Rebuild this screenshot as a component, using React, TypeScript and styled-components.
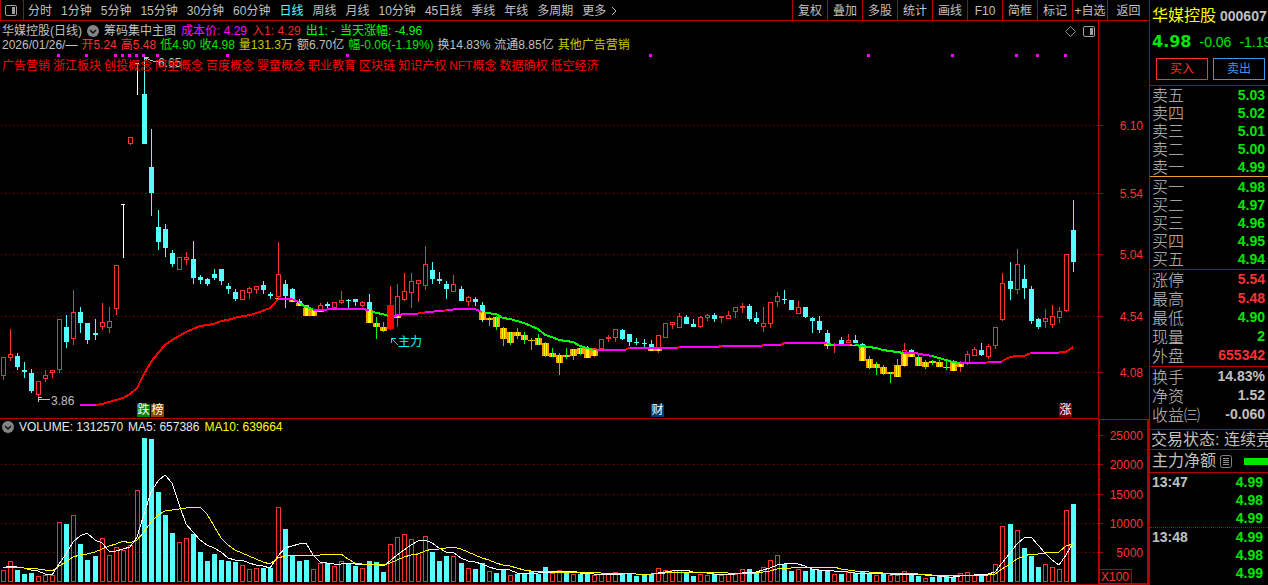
import React from "react";
import styled, { createGlobalStyle } from "styled-components";

const color = {
  line: "#b40000",
  dot: "#b00000",
  up: "#ff3232",
  down: "#54ffff",
  green: "#00e600",
  lime: "#00ff00",
  gray: "#c0c0c0",
  magenta: "#ff00ff",
};

const Global = createGlobalStyle`
  * { box-sizing: border-box; }
  body { margin: 0; background: #000; }
  #root { min-height: 100vh; }
  body, button {
    font-family: "Liberation Sans", "Noto Sans CJK SC", sans-serif;
    font-size: 12px;
    line-height: 14px;
    color: ${color.gray};
  }
  svg { display: block; }
`;

const Page = styled.div`
  display: grid;
  grid-template-columns: minmax(0, 1fr) 119px;
  min-height: 100vh;
  overflow: hidden;
  background: #000;
`;

const Main = styled.main`
  min-width: 0;
  display: flex;
  flex-direction: column;
`;

const Toolbar = styled.nav`
  display: flex;
  height: 21px;
  border-left: 1px solid ${color.line};
  border-bottom: 1px solid ${color.line};
  white-space: nowrap;
`;

const ToolIcon = styled.button`
  width: 23px;
  padding: 0 0 0 4px;
  border: 0;
  border-right: 1px solid ${color.line};
  background: none;
`;

const Periods = styled.div`
  display: flex;
  flex: 1;
  gap: 9px;
  padding-left: 4px;
  overflow: hidden;
`;

const Period = styled.button<{ $active?: boolean }>`
  display: flex;
  align-items: center;
  gap: 4px;
  padding: 2px 0 0;
  border: 0;
  background: none;
  color: ${(p) => (p.$active ? color.down : color.gray)};
`;

const Tools = styled.div`
  display: flex;
`;

const Tool = styled.button<{ $wide?: boolean }>`
  width: ${(p) => (p.$wide ? 42 : 35)}px;
  padding: 2px 0 0;
  border: 0;
  border-left: 1px solid ${color.line};
  background: none;
`;

const ChartRow = styled.section`
  display: flex;
  position: relative;
`;

const Plot = styled.div`
  position: relative;
  flex: 1;
  min-width: 0;
  overflow: hidden;
  border-bottom: 1px solid ${color.line};
`;

const Overlay = styled.header`
  position: absolute;
  inset: 3px 3px auto 2px;
  display: flex;
  justify-content: space-between;
  align-items: flex-start;
  white-space: nowrap;
`;

const Legend = styled.div`
  display: flex;
  flex-direction: column;
`;

const LegendRow = styled.div<{ $gap?: number; $tags?: boolean }>`
  display: flex;
  align-items: center;
  gap: ${(p) => p.$gap ?? 4}px;
  height: 14px;
  margin-top: ${(p) => (p.$tags ? 7 : 0)}px;
`;

const VolumeLegend = styled(LegendRow)`
  position: absolute;
  top: 1px;
  left: 2px;
`;

const Tint = styled.span<{ $c?: string }>`
  color: ${(p) => p.$c ?? color.gray};
`;

const Corner = styled.div`
  display: flex;
  align-items: center;
  gap: 7px;
  height: 14px;
`;

const Badge = styled.button<{ $x: number; $bg: string }>`
  position: absolute;
  left: ${(p) => p.$x}px;
  bottom: 1px;
  width: 13px;
  height: 13px;
  padding: 0;
  border: 0;
  line-height: 13px;
  text-align: center;
  color: #fff;
  background: ${(p) => p.$bg};
`;

const Side = styled.aside`
  min-width: 0;
  overflow: hidden;
  border-left: 1px solid ${color.line};
  white-space: nowrap;
`;

const Head = styled.header`
  border-bottom: 1px solid ${color.line};
  padding-bottom: 5px;
`;

const Title = styled.div`
  display: flex;
  align-items: center;
  gap: 4px;
  height: 30px;
  padding: 2px 0 0 2px;
  font-size: 16px;
  color: #ffff00;
`;

const Code = styled.b`
  font-size: 14px;
  color: ${color.gray};
`;

const Price = styled.div`
  display: flex;
  align-items: center;
  gap: 8px;
  height: 24px;
  padding-left: 2px;
  font-size: 14px;
  color: ${color.green};
`;

const Last = styled.b`
  font-family: "DejaVu Sans", sans-serif;
  font-size: 16px;
`;

const Trade = styled.div`
  display: flex;
  gap: 5px;
  padding: 4px 3px 0 6px;
`;

const TradeButton = styled.button<{ $c: string }>`
  flex: 1;
  height: 22px;
  padding: 0;
  border: 1px solid ${(p) => p.$c};
  background: none;
  color: ${(p) => p.$c};
`;

const Block = styled.div<{ $edge?: string; $pad?: string; $dotted?: boolean }>`
  padding: ${(p) => p.$pad ?? "0"};
  border-bottom: 1px ${(p) => (p.$dotted ? "dotted" : "solid")} ${(p) => p.$edge ?? color.line};
`;

const Quotes = styled.table<{ $row: number; $inset?: number }>`
  width: 100%;
  border-collapse: collapse;
  th, td {
    height: ${(p) => p.$row}px;
    padding: 0;
    line-height: ${(p) => p.$row}px;
  }
  th {
    padding: 2px 0 0 2px;
    line-height: ${(p) => p.$row - 2}px;
    text-align: left;
    font-size: 16px;
    font-weight: 300;
  }
  td {
    padding-right: ${(p) => p.$inset ?? 3}px;
    text-align: right;
    font-size: 14px;
    font-weight: 700;
  }
`;

const Ticks = styled(Quotes)`
  th {
    padding-top: 0;
    line-height: 18px;
    font-size: 14px;
    font-weight: 700;
  }
`;

const Status = styled.div`
  height: 19px;
  padding-left: 1px;
  font-size: 16px;
  line-height: 20px;
`;

const NetFlow = styled.div`
  display: flex;
  align-items: center;
  gap: 4px;
  height: 22px;
  padding-left: 2px;
  font-size: 16px;
  line-height: 20px;
`;

const FlowBar = styled.span`
  flex: 1;
  height: 7px;
  margin-left: 8px;
  background: ${color.green};
`;

/* kind, high, body top, body bottom, low [, gold top, gold bottom] */
const candleData = `
R,357,357,376,380;R,329,354,358,361;C,353,356,367,370;C,362,370,372,378;C,369,373,391,393;R,381,381,395,398;
R,370,375,379,382;R,370,370,373,378;R,319,319,370,373;C,315,327,342,348;R,290,312,339,345;C,307,312,323,333;
C,323,323,340,344;C,319,333,335,340;R,303,322,327,330;R,307,321,328,333;R,265,265,309,315;W,204,0,0,258;
R,137,137,144,145;W,63,0,0,95;C,57,94,144,144;C,129,167,193,216;C,210,227,242,250;C,224,229,248,257;
C,250,253,264,267;R,257,257,270,270;R,252,257,260,265;C,241,259,278,284;C,275,277,280,284;C,278,279,284,286;
C,269,274,278,280;C,269,269,281,285;C,283,286,289,294;C,289,292,299,301;R,290,290,300,300;R,287,288,293,299;
R,286,286,290,294;C,281,285,290,294;C,292,294,296,299;R,242,274,297,298,298,299;C,280,284,296,308,298,299;C,288,289,299,299,299,302;
C,299,301,303,303,303,306;C,305,305,308,308,308,316;G,309,0,0,309,309,316;R,303,305,310,310,310,312;C,302,304,306,308;R,302,302,308,309;
R,291,300,303,304;C,299,300,301,308;C,299,299,302,306;R,301,302,306,307;C,294,302,310,310,310,323;G,317,0,0,339,323,327;
G,322,0,0,332,327,331;B,286,305,329,330;R,284,296,316,327,316,318;R,273,291,300,301;R,273,281,293,308;R,280,280,284,302;
R,246,264,286,290;C,262,270,279,284;C,272,279,281,284;C,281,284,289,299;R,275,284,292,292;C,286,289,301,301;
R,296,297,302,306;C,297,299,302,306;C,302,305,312,322,312,320;G,317,0,0,326,318,320;G,316,0,0,330,317,327;G,327,0,0,346,328,339;
G,332,0,0,345,332,343;G,328,0,0,339,332,336;G,332,0,0,344,335,340;G,338,0,0,350,340,341;G,334,0,0,345,338,345;G,342,0,0,357,343,356;
G,348,0,0,357,353,357;G,353,0,0,375,355,363;G,348,0,0,359,355,357;G,349,0,0,360,349,356;G,345,0,0,355,348,354;C,346,0,0,348,348,358;
R,348,348,350,357,350,356;R,339,339,349,349;R,335,337,339,342;R,329,329,338,342;C,329,330,339,340;C,334,334,342,346;
C,338,342,343,345;C,339,343,344,347,348,349;C,340,344,347,347,348,351;R,335,335,348,353,348,351;R,323,323,338,338;R,322,322,325,329;
R,313,316,328,328;C,315,317,324,324;C,319,324,327,327;R,316,317,327,328;R,314,315,318,321;C,313,315,319,322;
R,316,316,318,323;R,311,315,319,319;R,307,307,312,318;R,303,306,308,313;C,304,306,319,321;C,312,318,322,324;
R,307,323,327,332;R,302,302,324,328;R,292,296,302,307;C,290,299,300,304;C,300,300,310,310;R,301,307,314,314;
C,307,307,317,318;C,317,318,321,333;C,316,321,330,333;C,330,333,343,349,343,346;R,343,0,0,353,345,346;C,337,340,344,344,345,346;
R,334,340,343,343,344,346;C,335,340,343,343,345,346;C,343,344,346,346,346,361;G,356,0,0,369,359,368;G,362,0,0,375,364,368;G,365,0,0,375,367,374;
G,372,0,0,383,372,374;G,359,0,0,376,365,377;R,343,350,353,367,353,366;C,349,350,353,353,353,357;G,354,0,0,366,357,366;G,360,0,0,369,362,367;
G,360,0,0,365,361,363;G,360,0,0,367,362,367;G,360,0,0,370,367,368;C,360,0,0,362,362,371;R,361,0,0,372,363,367;R,351,354,363,365,363,364;
R,347,349,356,356;C,343,350,355,356;R,344,346,357,359;R,327,327,346,349;R,273,283,320,321;C,262,281,289,300;
R,249,264,290,294;C,265,279,288,299;C,286,289,321,324;C,318,319,327,329;R,309,318,322,328;R,305,316,325,328;
R,307,311,318,323;R,254,254,311,312;C,200,230,262,272`;

const candles = candleData
  .replace(/\s/g, "")
  .split(";")
  .map((row) => {
    const [kind, ...n] = row.split(",");
    return { kind, n: n.map(Number) };
  });

/* bar heights; a leading minus marks a falling day */
const volumes = [
  12, 21, -12, -8, -9, 6, 7, 7, 60, -58, 67, -38, -22, -26, 44, 27, 35, 32, 37, 92, -144, -143, -90, -67, -49, 40, 44,
  -48, -30, -21, -28, -22, -21, -20, 17, 13, 14, -14, -14, 75, -53, -26, -21, -22, 13, 19, -19, 16, 21, -18, -16, 14,
  -21, -20, -10, 38, 45, 48, 43, 29, 46, -30, -21, -26, 26, -19, 14, -13, -19, 11, -9, -12, 7, -8, -9, -11, -8, -15, 9,
  12, -10, 8, -8, -9, 7, 8, 8, 10, -9, -9, -6, -8, -8, 14, 12, 12, 12, -10, -6, 8, 7, -8, 7, 8, 8, 13, -13, -9, 15, 22,
  27, -18, -11, 13, -11, -13, -12, -12, 8, -8, 10, -9, -11, -9, 7, -8, 7, 7, 11, -8, -6, 4, -5, -6, -6, -5, 9, 10, 7,
  -7, 8, 18, 56, -58, 52, -34, -26, -15, 18, 15, 13, 72, -78,
];

const candleX = (i: number) => 3 + 7 * i + Math.floor((i + 13) / 26);

const costLine: [string, string][] = [
  [color.magenta, "80,405 96,405"],
  [
    "#ff0000",
    "96,405 102,404 109,402 116,400 123,398 130,394 137,388 144,374 151,362 158,353 165,345 172,340 179,336 186,332 193,329 200,326 207,325 214,324 221,321 228,320 238,317 250,315 257,313 270,308 274,304 278,299",
  ],
  [color.magenta, "278,299 292,299 299,302"],
  [color.lime, "299,303 306,307 313,309"],
  [color.magenta, "313,310 341,309 362,309 369,310"],
  [color.lime, "371,311 376,313 383,314 388,316"],
  [color.magenta, "394,316 404,314 418,314"],
  ["#ff0000", "418,313 425,313"],
  [color.magenta, "425,312 443,311"],
  ["#ff0000", "443,311 447,310"],
  [color.magenta, "447,310 460,309 475,309 482,312"],
  [
    color.lime,
    "485,313 496,314 503,318 510,319 517,321 524,323 531,326 538,329 545,335 552,337 559,340 566,341 573,342 580,346 587,348 594,350",
  ],
  [color.magenta, "597,350 625,350 629,348 676,348 680,347 717,347 722,346 760,346 764,345 781,345 785,343 815,343 827,343"],
  ["#ff0000", "626,349 630,348"],
  ["#ff0000", "677,348 680,347"],
  ["#ff0000", "719,347 722,346"],
  ["#ff0000", "761,346 764,345"],
  ["#ff0000", "781,344 785,343"],
  [color.lime, "827,344 834,345"],
  [color.magenta, "834,345 850,345"],
  [color.lime, "855,345 862,346 869,347 876,348 883,350 890,351 897,352 904,353"],
  [color.magenta, "904,353 915,353 920,354 932,356"],
  [color.lime, "932,356 939,358 946,360 953,362 960,363"],
  [color.magenta, "960,363 985,363"],
  ["#ff0000", "985,363 989,362"],
  [color.magenta, "989,362 1002,362"],
  ["#ff0000", "1002,361 1010,357 1017,356 1024,356 1031,353"],
  [color.magenta, "1031,353 1059,353"],
  ["#ff0000", "1059,352 1066,352 1073,347"],
];

const signalDots = [58, 86, 115, 122, 129, 136, 143, 157, 227, 347, 650, 868, 952, 1016, 1037, 1065];

function Candle({ kind, n, x }: { kind: string; n: number[]; x: number }) {
  const [high, top, bottom, low, goldTop, goldBottom] = n;
  const c = kind === "G" ? color.lime : kind === "C" ? color.down : kind === "W" ? "#fff" : color.up;
  const gold = goldTop !== undefined && (
    <rect x={x - 3} y={goldTop} width={7} height={goldBottom - goldTop} fill="url(#gold)" />
  );
  if (kind === "W") {
    return (
      <g fill={c}>
        <rect x={x - 2} y={high} width={4} height={1} />
        <rect x={x} y={high} width={1} height={low - high} />
      </g>
    );
  }
  if (!top) {
    return (
      <g>
        {kind === "G" && gold}
        <rect x={x} y={high} width={1} height={low - high} fill={c} />
        {kind !== "G" && gold}
      </g>
    );
  }
  const hollow = kind === "R" && bottom - top > 2;
  return (
    <g>
      <rect x={x} y={high} width={1} height={Math.max(0, top - high)} fill={c} />
      <rect x={x} y={bottom} width={1} height={Math.max(0, low - bottom)} fill={c} />
      {hollow ? (
        <rect x={x - 1.5} y={top + 0.5} width={4} height={bottom - top - 1} fill="none" stroke={c} />
      ) : kind === "B" ? (
        <rect x={x - 3} y={top} width={7} height={bottom - top} fill="#ff0000" />
      ) : (
        <rect x={x - 2} y={top} width={5} height={bottom - top} fill={c} />
      )}
      {gold}
    </g>
  );
}

function Grid({ rows }: { rows: number[] }) {
  return (
    <g stroke={color.dot} strokeDasharray="1 3">
      {rows.map((y) => (
        <line key={y} x1={1} x2="100%" y1={y + 0.5} y2={y + 0.5} />
      ))}
    </g>
  );
}

const average = (span: number) =>
  volumes
    .map((_, i) => {
      let sum = 0;
      for (let k = i - span + 1; k <= i; k++) sum += k < 0 ? 15 : Math.abs(volumes[k]);
      return `${candleX(i)},${Math.round(163 - sum / span)}`;
    })
    .join(" ");

const ChevronDisc = () => (
  <svg width="12" height="12" viewBox="0 0 12 12">
    <circle cx="6" cy="6" r="6" fill="#858585" />
    <path d="M3 5l3 3 3-3" fill="none" stroke="#111" strokeWidth="1.5" />
  </svg>
);

const PanelIcon = () => (
  <svg width="12" height="11" viewBox="0 0 12 11">
    <rect x="0.5" y="0.5" width="11" height="10" rx="1.5" fill="none" stroke="#a0a0a0" />
    <rect x="7" y="2" width="3" height="7" fill="#a0a0a0" />
  </svg>
);

const priceTicks: [number, string][] = [
  [125, "6.10"],
  [193, "5.54"],
  [254, "5.04"],
  [316, "4.54"],
  [372, "4.08"],
];
const volumeTicks: [number, string][] = [
  [16, "25000"],
  [45, "20000"],
  [75, "15000"],
  [104, "10000"],
  [133, "5000"],
];

const periods = ["分时", "1分钟", "5分钟", "15分钟", "30分钟", "60分钟", "日线", "周线", "月线", "10分钟", "45日线", "季线", "年线", "多周期"];
const tools = ["复权", "叠加", "多股", "统计", "画线", "F10", "简框", "标记", "+自选", "返回"];
const tags = ["广告营销", "浙江板块", "创投概念", "阿里概念", "百度概念", "婴童概念", "职业教育", "区块链", "知识产权", "NFT概念", "数据确权", "低空经济"];

type Row = [string, string, string?];
const sells: Row[] = [["卖五", "5.03"], ["卖四", "5.02"], ["卖三", "5.01"], ["卖二", "5.00"], ["卖一", "4.99"]];
const buys: Row[] = [["买一", "4.98"], ["买二", "4.97"], ["买三", "4.96"], ["买四", "4.95"], ["买五", "4.94"]];
const stats: Row[] = [
  ["涨停", "5.54", color.up],
  ["最高", "5.48", color.up],
  ["最低", "4.90"],
  ["现量", "2"],
  ["外盘", "655342", color.up],
];
const ratios: Row[] = [
  ["换手", "14.83%", color.gray],
  ["净资", "1.52", color.gray],
  ["收益㈢", "-0.060", color.gray],
];

function QuoteTable({ rows, height }: { rows: Row[]; height: number }) {
  return (
    <Quotes $row={height}>
      <tbody>
        {rows.map(([label, value, c]) => (
          <tr key={label}>
            <th scope="row">{label}</th>
            <td>
              <Tint $c={c ?? color.green}>{value}</Tint>
            </td>
          </tr>
        ))}
      </tbody>
    </Quotes>
  );
}

function TickTable({ time, prices }: { time: string; prices: string[] }) {
  return (
    <Ticks $row={18} $inset={5}>
      <tbody>
        {prices.map((p, i) => (
          <tr key={i}>
            <th scope="row">{i === 0 && <time>{time}</time>}</th>
            <td>
              <Tint $c={color.green}>{p}</Tint>
            </td>
          </tr>
        ))}
      </tbody>
    </Ticks>
  );
}

function PriceChart() {
  return (
    <ChartRow>
      <Plot>
        <svg width="100%" height="397" shapeRendering="crispEdges">
          <defs>
            <linearGradient id="gold">
              <stop offset="0" stopColor="#ff9000" />
              <stop offset="0.28" stopColor="#ffa800" />
              <stop offset="0.29" stopColor="#ffff00" />
              <stop offset="0.71" stopColor="#ffff00" />
              <stop offset="0.72" stopColor="#ffa800" />
              <stop offset="1" stopColor="#ff9000" />
            </linearGradient>
          </defs>
          <g transform="translate(0 -21)">
            <Grid rows={priceTicks.map(([y]) => y)} />
            {candles.map((c, i) => (
              <Candle key={i} kind={c.kind} n={c.n} x={candleX(i)} />
            ))}
            {costLine.map(([c, points], i) => (
              <polyline key={i} points={points} fill="none" stroke={c} strokeWidth={2} />
            ))}
            {signalDots.map((x) => (
              <rect key={x} x={x - 1} y={54} width={3} height={3} fill={color.magenta} />
            ))}
            <g fill="none" stroke={color.gray}>
              <path d="M145 58l8 3h5M149 57h-4l2 4" />
              <path d="M38 399.500h12M42 397.500h-4v4" />
            </g>
            <path d="M391 338l7 7M391 343v-5h5" fill="none" stroke="#00dcdc" />
            <g fontSize="12">
              <text x="158" y="67" fill={color.gray}>6.65</text>
              <text x="51" y="405" fill={color.gray}>3.86</text>
              <text x="398" y="346" fill="#00ffff">主力</text>
            </g>
          </g>
        </svg>
        <Overlay>
          <Legend>
            <LegendRow $gap={5}>
              <Tint>华媒控股(日线)</Tint>
              <ChevronDisc />
              <Tint>筹码集中主图</Tint>
              <Tint $c={color.magenta}>成本价: 4.29</Tint>
              <Tint $c="#f02828">入1: 4.29</Tint>
              <Tint $c={color.lime}>出1: -</Tint>
              <Tint $c={color.lime}>当天涨幅: -4.96</Tint>
            </LegendRow>
            <LegendRow $gap={4}>
              <Tint>2026/01/26/—</Tint>
              <Tint $c={color.up}>开5.24</Tint>
              <Tint $c={color.up}>高5.48</Tint>
              <Tint $c={color.green}>低4.90</Tint>
              <Tint $c={color.green}>收4.98</Tint>
              <Tint $c="#c8c800">量131.3万</Tint>
              <Tint>额6.70亿</Tint>
              <Tint $c={color.green}>幅-0.06(-1.19%)</Tint>
              <Tint>换14.83%</Tint>
              <Tint>流通8.85亿</Tint>
              <Tint $c="#c8c800">其他广告营销</Tint>
            </LegendRow>
            <LegendRow $gap={3} $tags>
              {tags.map((t) => (
                <Tint key={t} $c="#ff0000">{t}</Tint>
              ))}
            </LegendRow>
          </Legend>
          <Corner>
            <svg width="11" height="11" viewBox="0 0 11 11">
              <path d="M5.5 0.5l5 5-5 5-5-5z" fill="none" stroke="#909090" />
            </svg>
            <PanelIcon />
          </Corner>
        </Overlay>
        <Badge $x={137} $bg="#008000">跌</Badge>
        <Badge $x={151} $bg="#8a4000">榜</Badge>
        <Badge $x={651} $bg="#003c70">财</Badge>
        <Badge $x={1059} $bg="#800000">涨</Badge>
      </Plot>
      <svg width="51" height="398" shapeRendering="crispEdges">
        <g transform="translate(0 -21)">
          <rect x="0" y="21" width="1" height="398" fill={color.line} />
          {priceTicks.map(([y, label]) => (
            <g key={label}>
              <rect x="1" y={y} width="4" height="1" fill={color.line} />
              <text x="45" y={y + 5} textAnchor="end" fontSize="12" fill={color.up}>{label}</text>
            </g>
          ))}
        </g>
      </svg>
    </ChartRow>
  );
}

function VolumeChart() {
  return (
    <ChartRow>
      <Plot>
        <svg width="100%" height="165" shapeRendering="crispEdges">
          <Grid rows={volumeTicks.slice(1).map(([y]) => y)} />
          {volumes.map((v, i) =>
            v > 0 ? (
              <rect key={i} x={candleX(i) - 1.5} y={163.5 - v} width={4} height={v - 1} fill="none" stroke={color.up} />
            ) : (
              <rect key={i} x={candleX(i) - 2} y={163 + v} width={5} height={-v} fill={color.down} />
            ),
          )}
          <polyline points={average(5)} fill="none" stroke="#ffffff" />
          <polyline points={average(10)} fill="none" stroke="#ffff00" />
        </svg>
        <VolumeLegend $gap={5}>
          <ChevronDisc />
          <Tint $c="#e8e8e8">VOLUME: 1312570</Tint>
          <Tint $c="#e8e8e8">MA5: 657386</Tint>
          <Tint $c="#ffff00">MA10: 639664</Tint>
        </VolumeLegend>
      </Plot>
      <svg width="51" height="166" shapeRendering="crispEdges">
        <rect x="1" y="0" width="49" height="165" fill="none" stroke={color.line} strokeWidth="2" />
        {volumeTicks.map(([y, label], i) => (
          <g key={label}>
            <rect x="2" y={y} width="3" height="1" fill={color.line} />
            {i < 4 && <rect x="2" y={y + 15} width="1" height="1" fill={color.line} />}
            <text x="45" y={y + 5} textAnchor="end" fontSize="12" fill={color.up}>{label}</text>
          </g>
        ))}
        <path d="M2 150.500h31.500v13" fill="none" stroke={color.line} />
        <text x="3" y="162" fontSize="12" fill={color.up}>X100</text>
      </svg>
    </ChartRow>
  );
}

export default function App() {
  return (
    <Page>
      <Global />
      <Main>
        <Toolbar>
          <ToolIcon aria-label="布局">
            <PanelIcon />
          </ToolIcon>
          <Periods>
            {periods.map((p) => (
              <Period key={p} $active={p === "日线"}>{p}</Period>
            ))}
            <Period>
              更多
              <svg width="8" height="10" viewBox="0 0 8 10">
                <path d="M2 1l4 4-4 4" fill="none" stroke={color.gray} />
              </svg>
            </Period>
          </Periods>
          <Tools>
            {tools.map((t) => (
              <Tool key={t} $wide={t === "返回"}>{t}</Tool>
            ))}
          </Tools>
        </Toolbar>
        <PriceChart />
        <VolumeChart />
      </Main>
      <Side>
        <Head>
          <Title>
            <span>华媒控股</span>
            <Code>000607</Code>
          </Title>
          <Price>
            <Last>4.98</Last>
            <span>-0.06</span>
            <span>-1.19%</span>
          </Price>
          <Trade>
            <TradeButton $c={color.up}>买入</TradeButton>
            <TradeButton $c="#3c96e6">卖出</TradeButton>
          </Trade>
        </Head>
        <Block $edge="#e8a030">
          <QuoteTable rows={sells} height={18} />
        </Block>
        <Block $pad="1px 0">
          <QuoteTable rows={buys} height={18} />
        </Block>
        <Block $pad="0 0 1px">
          <QuoteTable rows={stats} height={19} />
        </Block>
        <Block $pad="0 0 5px">
          <QuoteTable rows={ratios} height={19} />
        </Block>
        <Block>
          <Status>交易状态: 连续竞价</Status>
        </Block>
        <Block>
          <NetFlow>
            <span>主力净额</span>
            <svg width="12" height="13" viewBox="0 0 12 13">
              <rect x="0.5" y="0.5" width="11" height="12" rx="2" fill="none" stroke="#808080" />
              <path d="M3 3.500h6M3 5.500h6M3 7.500h6M3 9.500h6" stroke="#909090" />
            </svg>
            <FlowBar />
          </NetFlow>
        </Block>
        <Block $dotted>
          <TickTable time="13:47" prices={["4.99", "4.98", "4.99"]} />
        </Block>
        <TickTable time="13:48" prices={["4.99", "4.98", "4.99"]} />
      </Side>
    </Page>
  );
}
